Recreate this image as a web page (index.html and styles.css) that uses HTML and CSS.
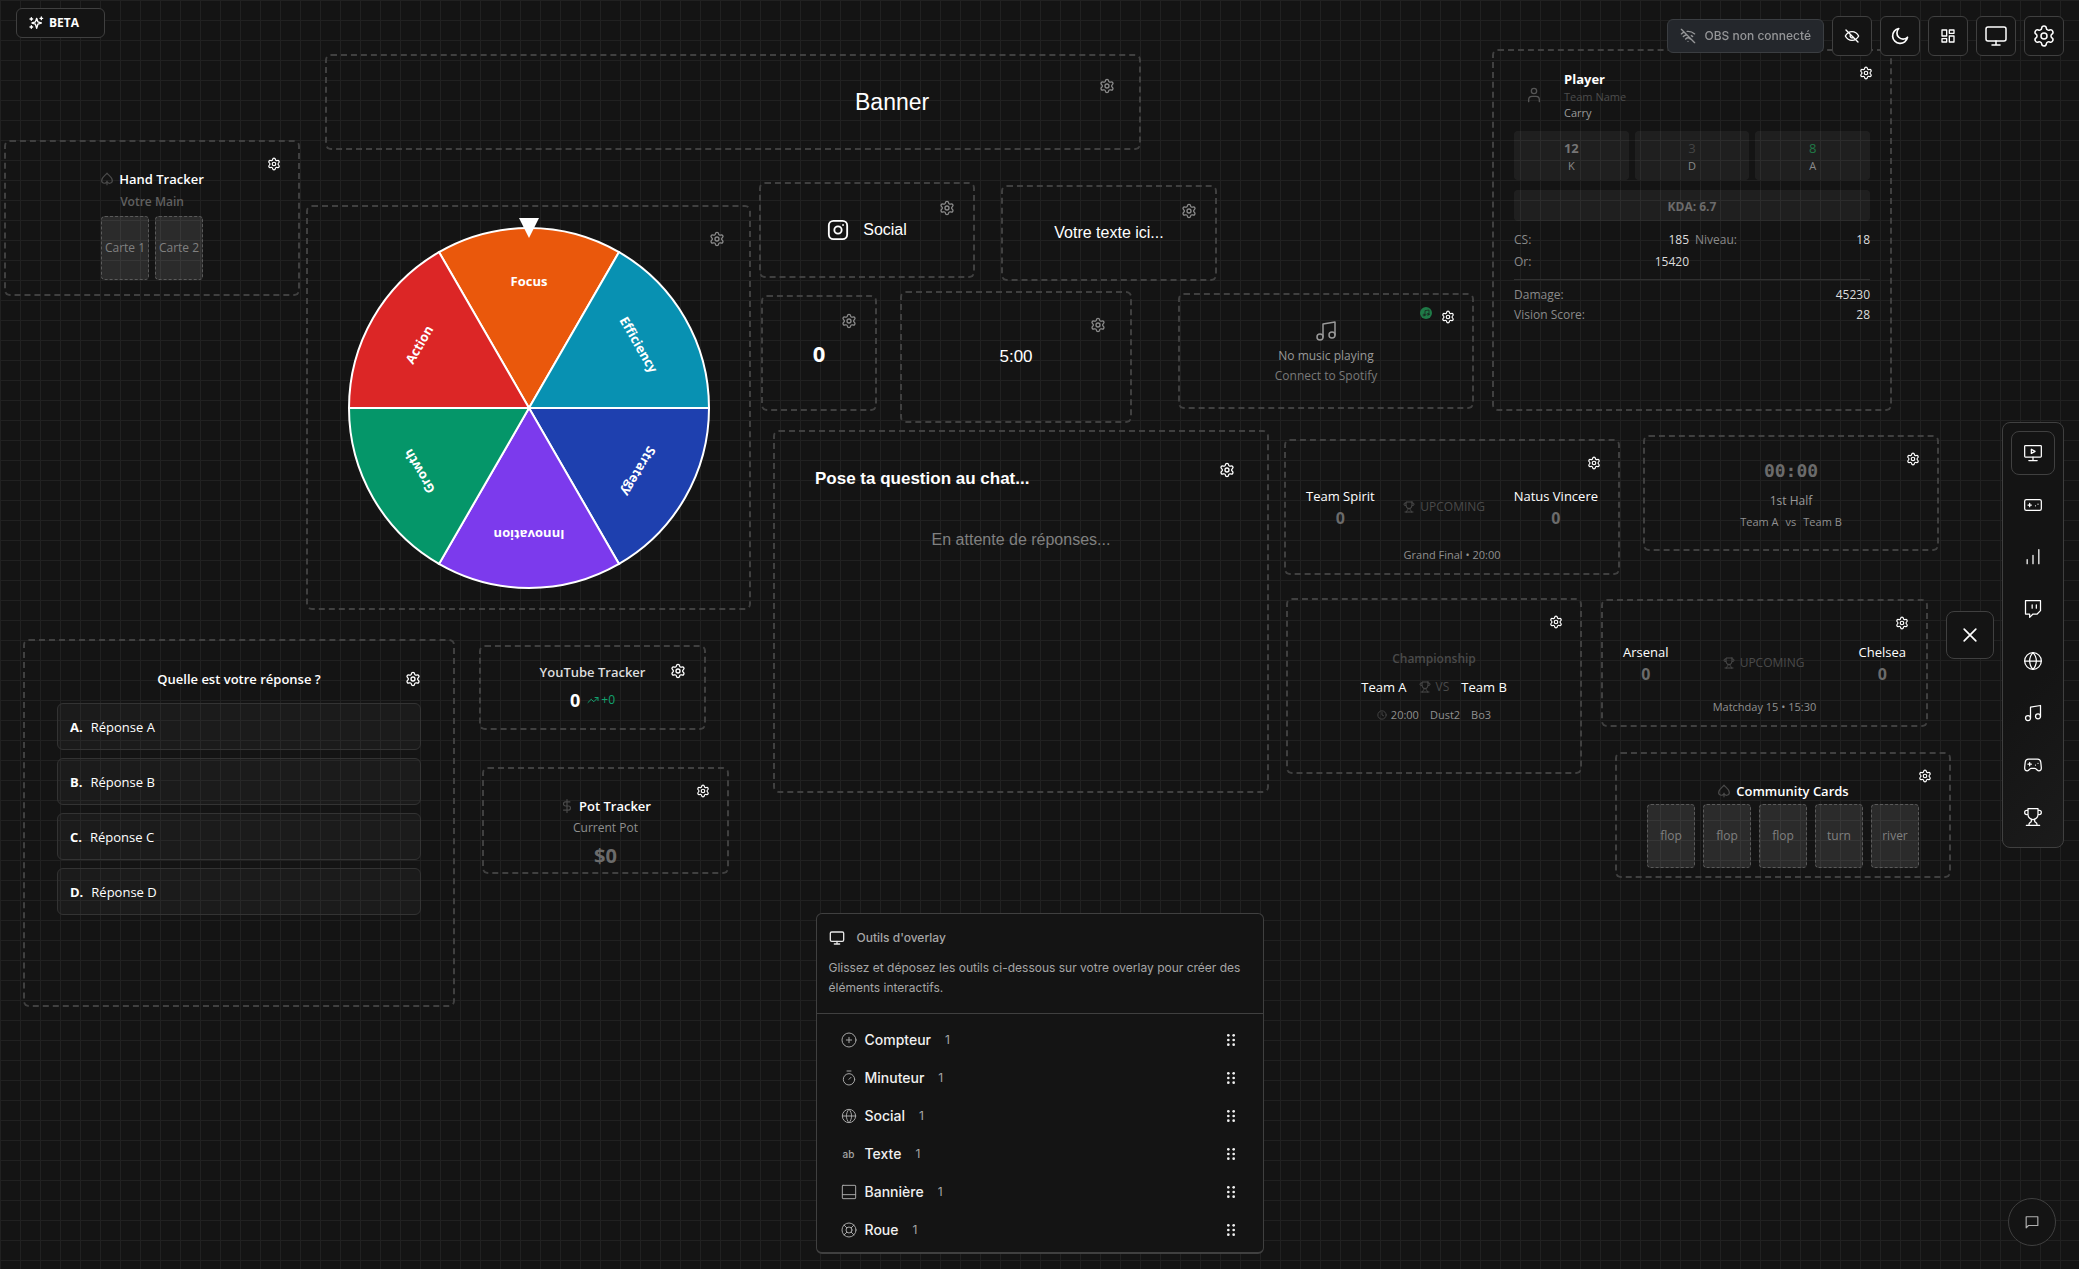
FILE: index.html
```
<!DOCTYPE html>
<html lang="fr">
  <head>
    <meta charset="utf-8">
    <title>Overlay Studio</title>
    <link rel="stylesheet" href="styles.css">
  </head>
  <body>
    <svg class="sprite" aria-hidden="true">
      <symbol id="settings" viewBox="0 0 24 24">
        <path d="M9.671 4.136a2.34 2.34 0 0 1 4.659 0 2.34 2.34 0 0 0 3.319 1.915 2.34 2.34 0 0 1 2.33 4.033 2.34 2.34 0 0 0 0 3.831 2.34 2.34 0 0 1-2.33 4.033 2.34 2.34 0 0 0-3.319 1.915 2.34 2.34 0 0 1-4.659 0 2.34 2.34 0 0 0-3.32-1.915 2.34 2.34 0 0 1-2.33-4.033 2.34 2.34 0 0 0 0-3.831A2.34 2.34 0 0 1 6.35 6.051a2.34 2.34 0 0 0 3.319-1.915"/>
        <circle cx="12" cy="12" r="3"/>
      </symbol>
      <symbol id="sparkles" viewBox="0 0 24 24">
        <path d="M13 5l1.800 5.200L20 12l-5.200 1.800L13 20l-1.800-6.200L6 12l5.200-1.800z"/>
        <path d="M5 4v4M3 6h4M5 16v4M3 18h4M20 3v4M18 5h4"/>
      </symbol>
      <symbol id="wifi-off" viewBox="0 0 24 24">
        <path d="M12 20h.01M8.500 16.430a5 5 0 0 1 7 0M5 12.860a10 10 0 0 1 5.170-2.690M19 12.860a10 10 0 0 0-2.010-1.520M2 8.820a15 15 0 0 1 4.180-2.640M22 8.820a15 15 0 0 0-11.290-3.760M2 2l20 20"/>
      </symbol>
      <symbol id="eye-off" viewBox="0 0 24 24">
        <path d="M2 12s3.500-6.500 10-6.500S22 12 22 12s-3.500 6.500-10 6.500S2 12 2 12z"/>
        <path d="M9.500 10.500a3 3 0 0 0 4.500 3.700"/>
        <path d="M3 3l18 18"/>
      </symbol>
      <symbol id="moon" viewBox="0 0 24 24">
        <path d="M21 13.500A9 9 0 1 1 10.500 3a7 7 0 0 0 10.500 10.500z"/>
      </symbol>
      <symbol id="layout" viewBox="0 0 24 24">
        <rect x="3" y="3" width="7" height="9"/>
        <rect x="14" y="3" width="7" height="5"/>
        <rect x="14" y="12" width="7" height="9"/>
        <rect x="3" y="16" width="7" height="5"/>
      </symbol>
      <symbol id="monitor" viewBox="0 0 24 24">
        <rect x="2" y="3" width="20" height="14" rx="2"/>
        <path d="M8 21h8M12 17v4"/>
      </symbol>
      <symbol id="monitor-play" viewBox="0 0 24 24">
        <rect x="2" y="3" width="20" height="14" rx="1"/>
        <path d="M10 7.500v5l4.500-2.500zM7 21h10M12 17v4"/>
      </symbol>
      <symbol id="console" viewBox="0 0 24 24">
        <rect x="2" y="5.500" width="20" height="13" rx="2"/>
        <path d="M6 12h4M8 10v4M15 13h.01M18 11h.01"/>
      </symbol>
      <symbol id="bars" viewBox="0 0 24 24">
        <path d="M5 20v-5M12 20V10M19 20V3"/>
      </symbol>
      <symbol id="twitch" viewBox="0 0 24 24">
        <path d="M21 2H3v16h5v4l4-4h5l4-4V2zM11 11V7M16 11V7"/>
      </symbol>
      <symbol id="globe" viewBox="0 0 24 24">
        <circle cx="12" cy="12" r="10"/>
        <path d="M2 12h20M12 2c-5.300 5.500-5.300 14.500 0 20M12 2c5.300 5.500 5.300 14.500 0 20"/>
      </symbol>
      <symbol id="music" viewBox="0 0 24 24">
        <path d="M9 18V5l12-2v13"/>
        <circle cx="6" cy="18" r="3"/>
        <circle cx="18" cy="16" r="3"/>
      </symbol>
      <symbol id="gamepad" viewBox="0 0 24 24">
        <path d="M6 11h4M8 9v4M15 12h.01M18 10h.01"/>
        <path d="M17.320 5H6.680a4 4 0 0 0-3.980 3.590C2.600 9.420 2 14.460 2 16a3 3 0 0 0 3 3c1 0 1.500-.5 2-1l1.410-1.410A2 2 0 0 1 9.830 16h4.340a2 2 0 0 1 1.420.59L17 18c.5.5 1 1 2 1a3 3 0 0 0 3-3c0-1.540-.6-6.580-.7-7.410A4 4 0 0 0 17.320 5z"/>
      </symbol>
      <symbol id="trophy" viewBox="0 0 24 24">
        <path d="M6 9H4.500a2.500 2.500 0 0 1 0-5H6M18 9h1.500a2.500 2.500 0 0 0 0-5H18M4 22h16M10 14.660V17c0 .55-.47.980-.97 1.210C7.850 18.750 7 20.240 7 22M14 14.660V17c0 .55.470.980.970 1.210C16.150 18.750 17 20.240 17 22M18 2H6v7a6 6 0 0 0 12 0V2z"/>
      </symbol>
      <symbol id="spade" viewBox="0 0 24 24">
        <path d="M12 2C9 6 3 9.500 3 14a4.500 4.500 0 0 0 9 1.500A4.500 4.500 0 0 0 21 14c0-4.500-6-8-9-12zM12 17v5"/>
      </symbol>
      <symbol id="user" viewBox="0 0 24 24">
        <path d="M20 22v-3a5 5 0 0 0-5-5H9a5 5 0 0 0-5 5v3"/>
        <circle cx="12" cy="6" r="4"/>
      </symbol>
      <symbol id="instagram" viewBox="0 0 24 24">
        <rect x="2" y="2" width="20" height="20" rx="5"/>
        <circle cx="12" cy="12" r="4"/>
        <path d="M17.500 6.500h.01"/>
      </symbol>
      <symbol id="clock" viewBox="0 0 24 24">
        <circle cx="12" cy="12" r="10"/>
        <path d="M12 6v6l4 2"/>
      </symbol>
      <symbol id="dollar" viewBox="0 0 24 24">
        <path d="M12 1v22M17 5H9.500a3.500 3.500 0 0 0 0 7h5a3.500 3.500 0 0 1 0 7H6"/>
      </symbol>
      <symbol id="trend" viewBox="0 0 24 24">
        <path d="M22 7l-8.500 8.500-5-5L2 17M16 7h6v6"/>
      </symbol>
      <symbol id="close" viewBox="0 0 24 24">
        <path d="M19 5L5 19M5 5l14 14"/>
      </symbol>
      <symbol id="plus-circle" viewBox="0 0 24 24">
        <circle cx="12" cy="12" r="10.500"/>
        <path d="M8 12h8M12 8v8"/>
      </symbol>
      <symbol id="timer" viewBox="0 0 24 24">
        <circle cx="12" cy="14" r="8.500"/>
        <path d="M9 1.500h6M12 14l3-3"/>
      </symbol>
      <symbol id="banner" viewBox="0 0 24 24">
        <rect x="2" y="2" width="20" height="20" rx="1"/>
        <path d="M2 16h20"/>
      </symbol>
      <symbol id="wheel" viewBox="0 0 24 24">
        <circle cx="12" cy="12" r="10.500"/>
        <circle cx="12" cy="12" r="4.500"/>
        <path d="M4.600 4.600l4.200 4.200M15.200 8.800l4.200-4.200M15.200 15.200l4.200 4.200M8.800 15.200l-4.200 4.200"/>
      </symbol>
      <symbol id="grip" viewBox="0 0 24 24">
        <g fill="currentColor" stroke="none">
          <circle cx="8" cy="5" r="2"/><circle cx="16" cy="5" r="2"/>
          <circle cx="8" cy="12" r="2"/><circle cx="16" cy="12" r="2"/>
          <circle cx="8" cy="19" r="2"/><circle cx="16" cy="19" r="2"/>
        </g>
      </symbol>
      <symbol id="message" viewBox="0 0 24 24">
        <path d="M22 3H2v19l4-4h16z"/>
      </symbol>
    </svg>

    <main class="canvas">
      <section class="widget widget--banner">
        <button class="gear gear--dim gear--far" aria-label="Réglages"><svg class="icon"><use href="#settings"/></svg></button>
        <h2 class="banner-text">Banner</h2>
      </section>

      <section class="widget widget--hand">
        <button class="gear" aria-label="Réglages"><svg class="icon"><use href="#settings"/></svg></button>
        <h2 class="title title--icon"><svg class="icon icon--faint"><use href="#spade"/></svg>Hand Tracker</h2>
        <p class="hand-label">Votre Main</p>
        <div class="cards cards--tight">
          <div class="card">Carte 1</div>
          <div class="card">Carte 2</div>
        </div>
      </section>

      <section class="widget widget--wheel">
        <button class="gear gear--dim gear--far" aria-label="Réglages"><svg class="icon"><use href="#settings"/></svg></button>
        <svg class="wheel" viewBox="-190 -190 380 380">
          <g class="wheel__slices">
            <path fill="#ea580c" d="M0 0L-90 -155.900A180 180 0 0 1 90 -155.900z"/>
            <path fill="#0891b2" d="M0 0L90 -155.900A180 180 0 0 1 180 0z"/>
            <path fill="#1e40af" d="M0 0L180 0A180 180 0 0 1 90 155.900z"/>
            <path fill="#7c3aed" d="M0 0L90 155.900A180 180 0 0 1 -90 155.900z"/>
            <path fill="#059669" d="M0 0L-90 155.900A180 180 0 0 1 -180 0z"/>
            <path fill="#dc2626" d="M0 0L-180 0A180 180 0 0 1 -90 -155.900z"/>
          </g>
          <g class="wheel__labels">
            <text y="-122">Focus</text>
            <text y="-122" transform="rotate(60)">Efficiency</text>
            <text y="-122" transform="rotate(120)">Strategy</text>
            <text y="-122" transform="rotate(180)">Innovation</text>
            <text y="-122" transform="rotate(240)">Growth</text>
            <text y="-122" transform="rotate(300)">Action</text>
          </g>
          <path fill="#fff" d="M-10 -190h20L0 -170z"/>
        </svg>
      </section>

      <section class="widget widget--social">
        <button class="gear gear--dim gear--mid" aria-label="Réglages"><svg class="icon"><use href="#settings"/></svg></button>
        <svg class="icon icon--lg"><use href="#instagram"/></svg>
        <span>Social</span>
      </section>

      <section class="widget widget--text">
        <button class="gear gear--dim gear--mid" aria-label="Réglages"><svg class="icon"><use href="#settings"/></svg></button>
        <span>Votre texte ici...</span>
      </section>

      <section class="widget widget--counter">
        <button class="gear gear--dim gear--mid" aria-label="Réglages"><svg class="icon"><use href="#settings"/></svg></button>
        <span>0</span>
      </section>

      <section class="widget widget--timer">
        <button class="gear gear--dim gear--far" aria-label="Réglages"><svg class="icon"><use href="#settings"/></svg></button>
        <span>5:00</span>
      </section>

      <section class="widget widget--spotify">
        <span class="spotify-badge"><svg class="icon"><use href="#music"/></svg></span>
        <button class="gear" aria-label="Réglages"><svg class="icon"><use href="#settings"/></svg></button>
        <svg class="icon icon--xl"><use href="#music"/></svg>
        <p class="spotify-status">No music playing</p>
        <p class="spotify-hint">Connect to Spotify</p>
      </section>

      <section class="widget widget--player">
        <button class="gear" aria-label="Réglages"><svg class="icon"><use href="#settings"/></svg></button>
        <header class="player">
          <div class="player__avatar"><svg class="icon"><use href="#user"/></svg></div>
          <div>
            <h2 class="player__name">Player</h2>
            <p class="player__team">Team Name</p>
            <p class="player__role">Carry</p>
          </div>
        </header>
        <div class="kda">
          <div class="kda__cell"><b class="kda__kills">12</b><span>K</span></div>
          <div class="kda__cell"><b class="kda__deaths">3</b><span>D</span></div>
          <div class="kda__cell"><b class="kda__assists">8</b><span>A</span></div>
        </div>
        <p class="kda-ratio">KDA: 6.7</p>
        <dl class="stats stats--split">
          <div><dt>CS:</dt><dd>185</dd></div>
          <div><dt>Niveau:</dt><dd>18</dd></div>
          <div><dt>Or:</dt><dd>15420</dd></div>
        </dl>
        <dl class="stats stats--total">
          <div><dt>Damage:</dt><dd>45230</dd></div>
          <div><dt>Vision Score:</dt><dd>28</dd></div>
        </dl>
      </section>

      <section class="widget widget--question">
        <button class="gear gear--inset" aria-label="Réglages"><svg class="icon"><use href="#settings"/></svg></button>
        <h2 class="question">Pose ta question au chat...</h2>
        <p class="question-wait">En attente de réponses...</p>
      </section>

      <section class="widget widget--match widget--spirit">
        <button class="gear" aria-label="Réglages"><svg class="icon"><use href="#settings"/></svg></button>
        <div class="match">
          <div class="team"><span>Team Spirit</span><b>0</b></div>
          <div class="match__state"><svg class="icon"><use href="#trophy"/></svg>UPCOMING</div>
          <div class="team"><span>Natus Vincere</span><b>0</b></div>
        </div>
        <p class="match__info">Grand Final • 20:00</p>
      </section>

      <section class="widget widget--clock">
        <button class="gear" aria-label="Réglages"><svg class="icon"><use href="#settings"/></svg></button>
        <div class="clock">00:00</div>
        <p class="clock-period">1st Half</p>
        <p class="clock-teams"><span>Team A</span><span>vs</span><span>Team B</span></p>
      </section>

      <section class="widget widget--champ">
        <button class="gear" aria-label="Réglages"><svg class="icon"><use href="#settings"/></svg></button>
        <h2 class="champ-title">Championship</h2>
        <div class="champ-teams">
          <span>Team A</span>
          <span class="match__state"><svg class="icon"><use href="#trophy"/></svg>VS</span>
          <span>Team B</span>
        </div>
        <div class="champ-info">
          <span class="champ-info__time"><svg class="icon icon--faint"><use href="#clock"/></svg>20:00</span>
          <span>Dust2</span>
          <span>Bo3</span>
        </div>
      </section>

      <section class="widget widget--match widget--arsenal">
        <button class="gear" aria-label="Réglages"><svg class="icon"><use href="#settings"/></svg></button>
        <div class="match">
          <div class="team"><span>Arsenal</span><b>0</b></div>
          <div class="match__state"><svg class="icon"><use href="#trophy"/></svg>UPCOMING</div>
          <div class="team"><span>Chelsea</span><b>0</b></div>
        </div>
        <p class="match__info">Matchday 15 • 15:30</p>
      </section>

      <section class="widget widget--community">
        <button class="gear" aria-label="Réglages"><svg class="icon"><use href="#settings"/></svg></button>
        <h2 class="title title--icon"><svg class="icon icon--faint"><use href="#spade"/></svg>Community Cards</h2>
        <div class="cards">
          <div class="card">flop</div>
          <div class="card">flop</div>
          <div class="card">flop</div>
          <div class="card">turn</div>
          <div class="card">river</div>
        </div>
      </section>

      <section class="widget widget--quiz">
        <button class="gear gear--inset" aria-label="Réglages"><svg class="icon"><use href="#settings"/></svg></button>
        <h2 class="title">Quelle est votre réponse ?</h2>
        <ul class="answers">
          <li class="answer"><b>A.</b>Réponse A</li>
          <li class="answer"><b>B.</b>Réponse B</li>
          <li class="answer"><b>C.</b>Réponse C</li>
          <li class="answer"><b>D.</b>Réponse D</li>
        </ul>
      </section>

      <section class="widget widget--youtube">
        <button class="gear gear--mid" aria-label="Réglages"><svg class="icon"><use href="#settings"/></svg></button>
        <h2 class="title title--soft">YouTube Tracker</h2>
        <div class="tracker"><b>0</b><span class="tracker__delta"><svg class="icon"><use href="#trend"/></svg>+0</span></div>
      </section>

      <section class="widget widget--pot">
        <button class="gear" aria-label="Réglages"><svg class="icon"><use href="#settings"/></svg></button>
        <h2 class="title title--icon"><svg class="icon icon--faint"><use href="#dollar"/></svg>Pot Tracker</h2>
        <p class="pot-label">Current Pot</p>
        <b class="pot-value">$0</b>
      </section>
    </main>

    <button class="beta"><svg class="icon icon--md"><use href="#sparkles"/></svg>BETA</button>

    <div class="topbar">
      <button class="obs" disabled><svg class="icon icon--md"><use href="#wifi-off"/></svg>OBS non connecté</button>
      <button class="square" aria-label="Masquer"><svg class="icon icon--md"><use href="#eye-off"/></svg></button>
      <button class="square" aria-label="Thème"><svg class="icon icon--lg"><use href="#moon"/></svg></button>
      <button class="square" aria-label="Disposition"><svg class="icon icon--md"><use href="#layout"/></svg></button>
      <button class="square" aria-label="Écran"><svg class="icon icon--xl"><use href="#monitor"/></svg></button>
      <button class="square" aria-label="Paramètres"><svg class="icon icon--xl"><use href="#settings"/></svg></button>
    </div>

    <div class="dock">
      <button class="dock__close" aria-label="Fermer"><svg class="icon"><use href="#close"/></svg></button>
      <nav class="dock__nav">
        <button class="dock__item dock__item--selected" aria-label="Overlay"><svg class="icon"><use href="#monitor-play"/></svg></button>
        <button class="dock__item" aria-label="Console"><svg class="icon"><use href="#console"/></svg></button>
        <button class="dock__item" aria-label="Statistiques"><svg class="icon"><use href="#bars"/></svg></button>
        <button class="dock__item" aria-label="Twitch"><svg class="icon"><use href="#twitch"/></svg></button>
        <button class="dock__item" aria-label="Web"><svg class="icon"><use href="#globe"/></svg></button>
        <button class="dock__item" aria-label="Musique"><svg class="icon"><use href="#music"/></svg></button>
        <button class="dock__item" aria-label="Jeux"><svg class="icon"><use href="#gamepad"/></svg></button>
        <button class="dock__item" aria-label="Esport"><svg class="icon"><use href="#trophy"/></svg></button>
      </nav>
    </div>

    <aside class="tools">
      <header class="tools__head">
        <h2 class="tools__title"><svg class="icon icon--md"><use href="#monitor"/></svg>Outils d'overlay</h2>
        <p class="tools__text">Glissez et déposez les outils ci-dessous sur votre overlay pour créer des éléments interactifs.</p>
      </header>
      <div class="tools__list">
        <button class="tool"><svg class="icon"><use href="#plus-circle"/></svg>Compteur<small>1</small><svg class="icon tool__grip"><use href="#grip"/></svg></button>
        <button class="tool"><svg class="icon"><use href="#timer"/></svg>Minuteur<small>1</small><svg class="icon tool__grip"><use href="#grip"/></svg></button>
        <button class="tool"><svg class="icon"><use href="#globe"/></svg>Social<small>1</small><svg class="icon tool__grip"><use href="#grip"/></svg></button>
        <button class="tool"><span class="tool__ab">ab</span>Texte<small>1</small><svg class="icon tool__grip"><use href="#grip"/></svg></button>
        <button class="tool"><svg class="icon"><use href="#banner"/></svg>Bannière<small>1</small><svg class="icon tool__grip"><use href="#grip"/></svg></button>
        <button class="tool"><svg class="icon"><use href="#wheel"/></svg>Roue<small>1</small><svg class="icon tool__grip"><use href="#grip"/></svg></button>
      </div>
    </aside>

    <button class="chat" aria-label="Discussion"><svg class="icon"><use href="#message"/></svg></button>
  </body>
</html>
```

FILE: styles.css
```
* {
  box-sizing: border-box;
}
body {
  margin: 0;
  min-height: 100vh;
  overflow: hidden;
  background-color: #141414;
  background-image:
    linear-gradient(to right, #212121 1px, transparent 1px),
    linear-gradient(to bottom, #212121 1px, transparent 1px);
  background-size: 20px 20px;
  color: #fff;
  font: 12px/16px "Open Sans", "Noto Sans", sans-serif;
}
h2, p, ul, dl, dd {
  margin: 0;
  padding: 0;
}
button {
  padding: 0;
  border: 0;
  background: none;
  color: inherit;
  font: inherit;
  cursor: pointer;
}
.sprite {
  display: none;
}

/* icons */
.icon {
  width: 12px;
  height: 12px;
  flex: none;
  fill: none;
  stroke: currentColor;
  stroke-width: 2;
  stroke-linecap: round;
  stroke-linejoin: round;
}
.icon--md {
  width: 16px;
  height: 16px;
}
.icon--lg {
  width: 20px;
  height: 20px;
}
.icon--xl {
  width: 24px;
  height: 24px;
}
.icon--faint {
  color: #4a4a4a;
}

/* canvas and widgets */
.canvas {
  position: relative;
  height: 100vh;
}
.widget {
  position: absolute;
  display: flex;
  flex-direction: column;
  align-items: center;
  border: 2px dashed #404040;
  border-radius: 6px;
}
.gear {
  position: absolute;
  top: 10px;
  right: 12px;
  display: flex;
  align-items: center;
  justify-content: center;
  width: 24px;
  height: 24px;
}
.gear .icon {
  width: 14px;
  height: 14px;
}
.gear--mid {
  top: 12px;
  right: 14px;
}
.gear--far {
  top: 20px;
  right: 20px;
}
.gear--inset {
  top: 26px;
  right: 28px;
}
.gear--mid .icon,
.gear--far .icon,
.gear--inset .icon {
  width: 16px;
  height: 16px;
}
.gear--dim {
  color: #8a8a8a;
}
.title {
  font-size: 13px;
  font-weight: 600;
  line-height: 20px;
}
.title--icon {
  display: flex;
  align-items: center;
  gap: 5px;
}
.title--icon .icon {
  width: 14px;
  height: 14px;
}
.title--soft {
  color: #ddd;
}
.cards {
  display: flex;
  gap: 8px;
}
.cards--tight {
  gap: 6px;
}
.card {
  display: flex;
  align-items: center;
  justify-content: center;
  width: 48px;
  height: 64px;
  border: 1px dashed #5a5a5a;
  border-radius: 4px;
  background: rgba(255, 255, 255, .1);
  color: #808080;
}

.widget--banner {
  left: 325px;
  top: 54px;
  width: 816px;
  height: 96px;
  justify-content: center;
  align-items: flex-start;
  padding-left: 528px;
}
.widget--banner .gear {
  top: 18px;
}
.banner-text {
  font: 500 23px/28px "Liberation Sans", Arial, sans-serif;
}
.widget--hand {
  left: 4px;
  top: 140px;
  width: 296px;
  height: 156px;
  padding-top: 27px;
}
.hand-label {
  margin: 5px 0 6px;
  color: #606060;
  font-weight: 600;
}
.widget--wheel {
  left: 306px;
  top: 205px;
  width: 445px;
  height: 405px;
  padding-top: 11px;
}
.wheel {
  width: 380px;
  height: 380px;
}
.wheel__slices {
  stroke: #fff;
  stroke-width: 2;
}
.wheel__labels {
  fill: #fff;
  font-size: 13px;
  font-weight: 700;
  text-anchor: middle;
}
.widget--social,
.widget--text {
  width: 216px;
  height: 96px;
  flex-direction: row;
  justify-content: center;
  gap: 14px;
  font: 16px/24px "Liberation Sans", Arial, sans-serif;
}
.widget--social {
  left: 759px;
  top: 182px;
}
.widget--social .icon--lg {
  width: 22px;
  height: 22px;
}
.widget--text {
  left: 1001px;
  top: 185px;
}
.widget--counter {
  left: 761px;
  top: 295px;
  width: 116px;
  height: 116px;
  justify-content: center;
  font-size: 22px;
  font-weight: 700;
}
.widget--timer {
  left: 900px;
  top: 291px;
  width: 232px;
  height: 132px;
  justify-content: center;
  font: 17px/24px "Liberation Sans", Arial, sans-serif;
}
.widget--spotify {
  left: 1178px;
  top: 293px;
  width: 296px;
  height: 116px;
  padding-top: 24px;
  color: #999;
}
.widget--spotify .gear {
  color: #fff;
}
.widget--spotify .icon--xl {
  stroke-width: 1.500;
}
.spotify-badge {
  position: absolute;
  top: 12px;
  right: 40px;
  display: flex;
  padding: 2px;
  border-radius: 50%;
  background: #1f7a47;
  color: #1a1a1a;
}
.spotify-badge .icon {
  width: 8px;
  height: 8px;
}
.spotify-status {
  margin: 5px 0 4px;
}
.spotify-hint {
  color: #7a7a7a;
}

/* player */
.widget--player {
  left: 1492px;
  top: 49px;
  width: 400px;
  height: 362px;
  align-items: stretch;
  padding: 18px 20px;
}
.player {
  display: flex;
  align-items: center;
  gap: 10px;
}
.player__avatar {
  display: flex;
  align-items: center;
  justify-content: center;
  width: 40px;
  height: 40px;
  color: #555;
}
.player__avatar .icon {
  width: 16px;
  height: 16px;
}
.player__name {
  font-size: 13px;
  font-weight: 700;
  line-height: 20px;
}
.player__team {
  color: #4d4d4d;
  font-size: 11px;
}
.player__role {
  color: #9a9a9a;
  font-size: 11px;
}
.kda {
  display: grid;
  grid-template-columns: repeat(3, 1fr);
  gap: 6px;
  margin: 10px 0;
}
.kda__cell {
  display: flex;
  flex-direction: column;
  align-items: center;
  padding: 7px 0 6px;
  border-radius: 4px;
  background: rgba(255, 255, 255, .05);
  color: #8a8a8a;
  font-size: 11px;
  line-height: 16px;
}
.kda__cell b {
  font-size: 13px;
  line-height: 20px;
}
.kda__kills {
  color: #757575;
}
.kda__cell .kda__deaths,
.kda__cell .kda__assists {
  font-weight: 400;
}
.kda__deaths {
  color: #444;
}
.kda__assists {
  color: #1f7a47;
}
.kda-ratio {
  padding: 9px 0 6px;
  border-radius: 4px;
  background: rgba(255, 255, 255, .05);
  color: #6b6b6b;
  font-weight: 700;
  text-align: center;
}
.stats {
  display: grid;
}
.stats div {
  display: flex;
  justify-content: space-between;
}
.stats dt {
  color: #8a8a8a;
}
.stats dd {
  color: #ddd;
}
.stats--split {
  grid-template-columns: 1fr 1fr;
  gap: 6px;
  margin-top: 11px;
}
.stats--total {
  gap: 4px;
  margin-top: 9px;
  padding-top: 7px;
  border-top: 1px solid #303030;
}

/* question and quiz */
.widget--question {
  left: 773px;
  top: 430px;
  width: 496px;
  height: 363px;
  align-items: stretch;
  padding: 35px 40px;
  font-family: "Liberation Sans", Arial, sans-serif;
}
.question {
  font-size: 17px;
  font-weight: 700;
  line-height: 24px;
}
.question-wait {
  margin-top: 37px;
  color: #808080;
  font-size: 16px;
  line-height: 24px;
  text-align: center;
}
.widget--quiz {
  left: 23px;
  top: 639px;
  width: 432px;
  height: 368px;
  padding: 28px 32px;
}
.answers {
  display: flex;
  flex-direction: column;
  gap: 8px;
  align-self: stretch;
  margin-top: 14px;
  list-style: none;
}
.answer {
  display: flex;
  gap: 8px;
  padding: 14px 12px 12px;
  border: 1px solid #333;
  border-radius: 6px;
  background: rgba(255, 255, 255, .03);
  font-size: 13px;
  line-height: 19px;
}

/* esport widgets */
.widget--match {
  align-items: stretch;
  padding: 0 20px 10px;
}
.widget--spirit {
  left: 1284px;
  top: 439px;
  width: 336px;
  height: 136px;
  padding-top: 45px;
}
.widget--arsenal {
  left: 1601px;
  top: 599px;
  width: 327px;
  height: 128px;
  padding-top: 41px;
}
.match {
  display: flex;
  align-items: center;
  justify-content: space-between;
}
.team {
  display: flex;
  flex-direction: column;
  align-items: center;
  gap: 2px;
  font-size: 13px;
  line-height: 20px;
}
.team b {
  color: #6b6b6b;
  font-size: 16px;
}
.match__state {
  display: flex;
  align-items: center;
  gap: 5px;
  color: #4a4a4a;
  font-size: 12px;
}
.match__info {
  margin-top: auto;
  color: #909090;
  font-size: 11px;
  line-height: 16px;
  text-align: center;
}
.widget--clock {
  left: 1643px;
  top: 435px;
  width: 296px;
  height: 116px;
  padding-top: 22px;
}
.clock {
  color: #6b6b6b;
  font: 700 18px/24px "DejaVu Sans Mono", monospace;
}
.clock-period {
  margin: 10px 0 5px;
  color: #9a9a9a;
}
.clock-teams {
  display: flex;
  gap: 7px;
  color: #909090;
  font-size: 11px;
}
.widget--champ {
  left: 1286px;
  top: 598px;
  width: 296px;
  height: 176px;
  padding-top: 51px;
}
.champ-title {
  color: #4a4a4a;
  font-size: 12px;
  font-weight: 600;
}
.champ-teams {
  display: flex;
  align-items: center;
  gap: 12px;
  margin: 10px 0;
  font-size: 13px;
  line-height: 20px;
}
.champ-info {
  display: flex;
  gap: 11px;
  color: #909090;
  font-size: 11px;
}
.champ-info__time {
  display: flex;
  align-items: center;
  gap: 4px;
}
.champ-info .icon {
  width: 10px;
  height: 10px;
}
.widget--community {
  left: 1615px;
  top: 752px;
  width: 336px;
  height: 126px;
  padding-top: 27px;
}
.widget--community .cards {
  margin-top: 3px;
}

/* trackers */
.widget--youtube {
  left: 479px;
  top: 645px;
  width: 227px;
  height: 85px;
  padding-top: 15px;
}
.tracker {
  display: flex;
  align-items: center;
  gap: 7px;
  margin-top: 6px;
}
.tracker b {
  font-size: 18px;
  line-height: 24px;
}
.tracker__delta {
  display: flex;
  align-items: center;
  gap: 2px;
  color: #12a36f;
}
.widget--pot {
  left: 482px;
  top: 767px;
  width: 247px;
  height: 107px;
  padding-top: 27px;
}
.pot-label {
  margin: 4px 0 8px;
  color: #8f8f8f;
}
.pot-value {
  color: #6b6b6b;
  font-size: 20px;
  line-height: 24px;
}

/* top bar */
.beta {
  position: fixed;
  top: 8px;
  left: 16px;
  display: flex;
  align-items: center;
  gap: 5px;
  width: 89px;
  height: 30px;
  padding-left: 11px;
  border: 1px solid #404040;
  border-radius: 6px;
  background: #141414;
  font-weight: 700;
}
.topbar {
  position: fixed;
  top: 16px;
  right: 15px;
  display: flex;
  align-items: center;
  gap: 8px;
  font-family: Inter, sans-serif;
}
.obs {
  display: flex;
  align-items: center;
  gap: 8px;
  height: 34px;
  padding: 0 12px;
  border: 1px solid #3b3e42;
  border-radius: 6px;
  background: #24272c;
  color: #959698;
  font-weight: 500;
}
.square {
  display: flex;
  align-items: center;
  justify-content: center;
  width: 40px;
  height: 40px;
  border: 1px solid #404040;
  border-radius: 6px;
  background: #141414;
}
.square .icon--xl {
  stroke-width: 1.500;
}

/* dock */
.dock {
  position: fixed;
  top: 0;
  bottom: 0;
  right: 15px;
  display: flex;
  align-items: center;
  gap: 8px;
  pointer-events: none;
}
.dock button {
  display: flex;
  align-items: center;
  justify-content: center;
  pointer-events: auto;
}
.dock .icon {
  width: 20px;
  height: 20px;
  stroke-width: 1.500;
}
.dock__close {
  width: 48px;
  height: 48px;
  border: 1px solid #404040;
  border-radius: 8px;
  background: #141414;
}
.dock .dock__close .icon {
  stroke-width: 2;
}
.dock__nav {
  display: flex;
  flex-direction: column;
  gap: 8px;
  padding: 8px;
  border: 1px solid #404040;
  border-radius: 8px;
  background: linear-gradient(135deg, #141414 60%, #1b1b1b);
}
.dock__item {
  width: 44px;
  height: 44px;
  border-radius: 8px;
}
.dock__item--selected {
  border: 1px solid #404040;
}

/* tools panel */
.tools {
  position: fixed;
  bottom: 15px;
  left: 50%;
  width: 448px;
  border: 1px solid #404040;
  border-bottom-width: 2px;
  border-radius: 6px;
  background: #141414;
  color: #a6a6a6;
  font-family: Inter, sans-serif;
  transform: translateX(-50%);
}
.tools__head {
  padding: 16px 12px 15px;
  border-bottom: 1px solid #404040;
}
.tools__title {
  display: flex;
  align-items: center;
  gap: 12px;
  font-size: 12px;
  font-weight: 500;
  line-height: 16px;
}
.tools__title .icon {
  color: #e5e5e5;
}
.tools__text {
  margin-top: 12px;
  line-height: 20px;
}
.tools__list {
  display: flex;
  flex-direction: column;
  padding: 7px 24px 3px;
}
.tool {
  display: flex;
  align-items: center;
  gap: 8px;
  height: 38px;
  color: #f0f0f0;
  font-size: 14px;
  font-weight: 500;
}
.tool .icon {
  width: 16px;
  height: 16px;
  color: #a6a6a6;
  stroke-width: 1.500;
}
.tool small {
  margin-left: 6px;
  color: #a6a6a6;
  font-size: 12px;
  font-weight: 400;
}
.tool .tool__grip {
  margin-left: auto;
  color: #f0f0f0;
}
.tool__ab {
  width: 16px;
  color: #a6a6a6;
  font-size: 10px;
}

.chat {
  position: fixed;
  right: 23px;
  bottom: 23px;
  display: flex;
  align-items: center;
  justify-content: center;
  width: 48px;
  height: 48px;
  border: 1px solid #404040;
  border-radius: 50%;
  background: #141414;
  color: #b0b0b0;
}
.chat .icon {
  width: 14px;
  height: 14px;
}
```
